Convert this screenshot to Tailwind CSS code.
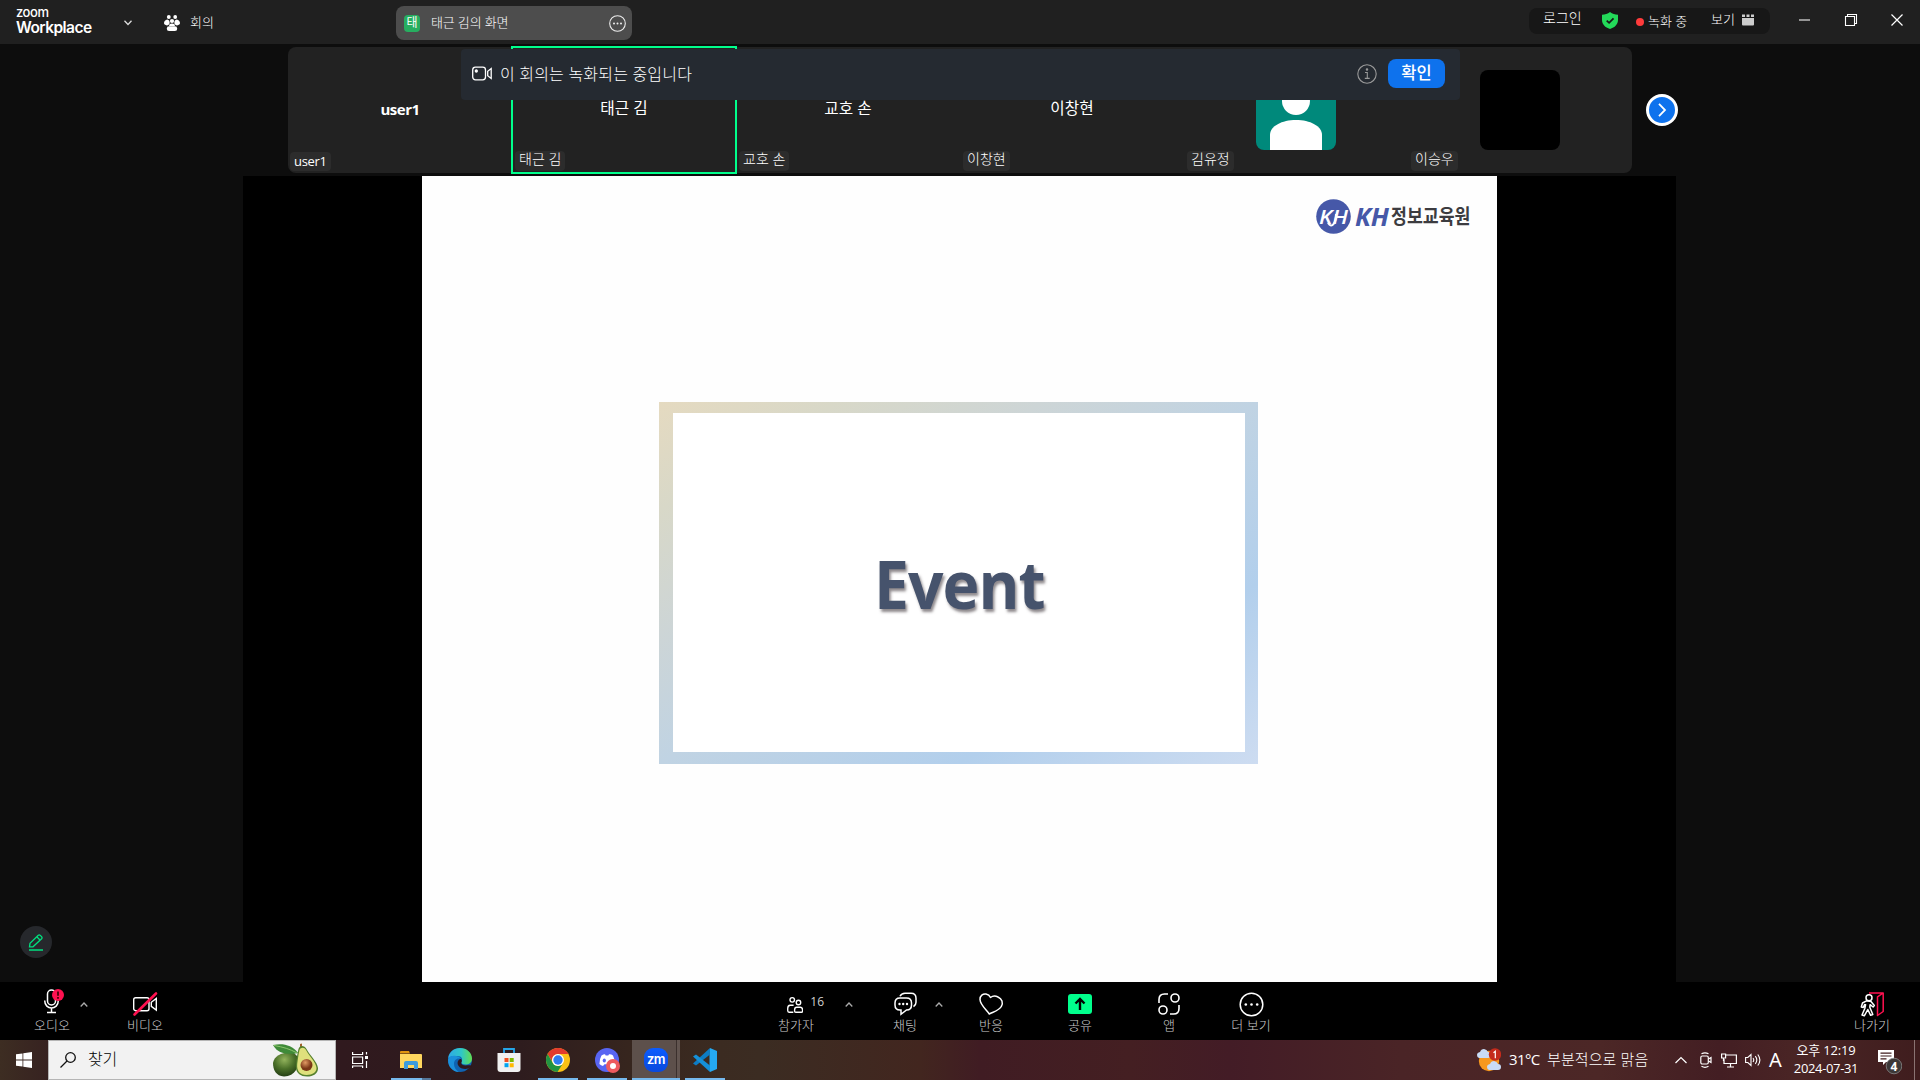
<!DOCTYPE html>
<html lang="ko">
<head>
<meta charset="utf-8">
<title>Zoom Workplace</title>
<script src="https://cdn.jsdelivr.net/npm/@tailwindcss/browser@4"></script>
</head>
<body class="w-[1920px] h-[1080px] overflow-hidden bg-[#0d0d0d] text-white flex flex-col font-['Open_Sans','Noto_Sans_CJK_KR',sans-serif]">

<!-- title bar -->
<header class="h-[44px] shrink-0 bg-[#202020] flex items-start">
  <div class="pl-[16px] w-[123px] pt-[6px] font-['Inter',sans-serif]">
    <div class="text-[13px] leading-[13px] font-medium tracking-[-0.45px]">zoom</div>
    <div class="text-[15.5px] leading-[17px] font-semibold tracking-[-0.55px]">Workplace</div>
  </div>
  <svg class="w-[10px] h-[6px] mt-[20px]" viewBox="0 0 10 6" fill="none" stroke="#ddd" stroke-width="1.3"><path d="M1.5 .8 5 4.5 8.500 .8"/></svg>
  <svg class="w-[16px] h-[17px] mt-[15px] ml-[31px]" viewBox="0 0 16 17" fill="#fff"><circle cx="4.800" cy="2" r="1.900"/><circle cx="11.200" cy="2" r="1.900"/><circle cx="8" cy="6" r="2.100"/><path d="M3.200 4.500C5 4.800 5.500 6 5.600 7.200 6 8.700 5 9.800 3 10.400 1 10.200 0 9.300 0 8c0-1.800 1.500-3.300 3.200-3.500zM12.800 4.500C11 4.800 10.500 6 10.400 7.200 10 8.700 11 9.800 13 10.400c2-.2 3-1.100 3-2.400 0-1.800-1.500-3.300-3.200-3.500z"/><path d="M5.500 9.200C7 8.400 9 8.400 10.500 9.200L11 11H5z"/><rect x="2.800" y="11.300" width="10.400" height="4.700" rx="2.300"/></svg>
  <span class="text-[13px] leading-[18px] mt-[13px] ml-[10px] w-[206px] font-light">회의</span>
  <div class="w-[236px] h-[34px] mt-[6px] rounded-lg bg-[#4d4d4d] flex items-center pl-2 pr-[6px]">
    <span class="w-4 h-[17px] rounded bg-[#27ae60] text-[12px] leading-[15px] text-center">태</span>
    <span class="text-[13px] leading-[18px] ml-[11px] flex-1 tracking-[-0.15px] -mt-[2px] font-light">태근 김의 화면</span>
    <svg class="w-[17px] h-[17px]" viewBox="0 0 17 17"><circle cx="8.500" cy="8.500" r="7.800" fill="none" stroke="#eee" stroke-width="1.100"/><g fill="#eee"><circle cx="5" cy="8.500" r="1"/><circle cx="8.500" cy="8.500" r="1"/><circle cx="12" cy="8.500" r="1"/></g></svg>
  </div>
  <div class="ml-[897px] mt-[8px] w-[241px] h-[26px] rounded-lg bg-[#171717] flex items-start text-[14px] leading-[18px] font-light">
    <span class="ml-[14px] mt-[1px] w-[59px]">로그인</span>
    <svg class="w-4 h-[17px] mt-1" viewBox="0 0 16 17"><path d="M8 0c2.300 1.900 5 2.600 8 2.700V8c0 4.300-3.200 7.500-8 9C3.200 15.500 0 12.300 0 8V2.700C3 2.600 5.700 1.900 8 0z" fill="#23d959"/><path d="m4.700 8.600 2.400 2.300 4.400-4.600" fill="none" stroke="#171717" stroke-width="1.700"/></svg>
    <span class="w-2 h-2 rounded-full bg-[#ff3b3b] ml-[18px] mt-[10px]"></span>
    <span class="text-[13px] mt-[4px] ml-[4px] w-[63px] whitespace-nowrap">녹화 중</span>
    <span class="text-[13px] mt-[2px] w-[31px]">보기</span>
    <svg class="w-3 h-3 mt-[6px]" viewBox="0 0 12 12" fill="#ccc"><path d="M0 4h12v6.500a1 1 0 0 1-1 1H1a1 1 0 0 1-1-1z"/><path d="M0 .5h3V3H0zM4.500 .5h3V3h-3zM9 .5h3V3H9z"/></svg>
  </div>
  <svg class="w-[105px] h-3 mt-[14px] ml-[29px]" viewBox="0 0 105 12" fill="none" stroke="#fff"><path d="M0 6h11" stroke="#bbb" stroke-width="1.500"/><path d="M46.500 2.500h9v9h-9zM48.500 2.500V.5h9v9h-2" stroke-width="1.100"/><path d="m92.500.5 11 11m0-11-11 11" stroke-width="1.200"/></svg>
</header>

<!-- meeting area -->
<main class="relative h-[938px] shrink-0 flex flex-col items-center">
  <section class="mt-[3px] ml-0 w-[1344px] h-[126px] shrink-0 rounded-lg bg-[#222] grid grid-cols-6 text-[15.7px]">
    <div class="relative flex items-center justify-center font-bold text-[15px] tracking-[-0.5px] pb-[2px]">user1
      <span class="absolute left-[2px] bottom-[2px] h-[19px] px-1 rounded bg-[#2c2c2c] font-normal text-[13px] leading-[18px] tracking-[-0.3px]">user1</span></div>
    <div class="relative flex items-center justify-center pb-[3px]">태근 김
      <span class="absolute -left-px -top-px w-[226px] h-[128px] border-2 border-[#00ff8c]"></span>
      <span class="absolute left-[3px] bottom-[2px] h-5 px-1 rounded bg-[#2c2c2c] font-light text-[14px] leading-[16px]">태근 김</span></div>
    <div class="relative flex items-center justify-center pb-[3px]">교호 손
      <span class="absolute left-[3px] bottom-[2px] h-5 px-1 rounded bg-[#2c2c2c] font-light text-[14px] leading-[16px]">교호 손</span></div>
    <div class="relative flex items-center justify-center pb-[3px]">이창현
      <span class="absolute left-[3px] bottom-[2px] h-5 px-1 rounded bg-[#2c2c2c] font-light text-[14px] leading-[16px]">이창현</span></div>
    <div class="relative flex items-center justify-center">
      <svg class="w-20 h-20 rounded-lg" viewBox="0 0 80 80"><path fill="#00897b" d="M0 0h80v80H0z"/><circle cx="40" cy="31" r="14" fill="#fff"/><path d="M14 80V65c0-9 12-15 26-15s26 6 26 15v15z" fill="#fff"/></svg>
      <span class="absolute left-[3px] bottom-[2px] h-5 px-1 rounded bg-[#2c2c2c] font-light text-[14px] leading-[16px]">김유정</span></div>
    <div class="relative flex items-center justify-center"><div class="w-20 h-20 rounded-lg bg-black"></div>
      <span class="absolute left-[3px] bottom-[2px] h-5 px-1 rounded bg-[#2c2c2c] font-light text-[14px] leading-[16px]">이승우</span></div>
  </section>
  <!-- next page of participants -->
  <button class="absolute left-[1646px] top-[50px] w-8 h-8 rounded-full border-[3px] border-white bg-[#0e72ed] flex items-center justify-center"><svg class="w-[10px] h-[14px]" viewBox="0 0 10 14" fill="none" stroke="#fff" stroke-width="1.800"><path d="m2 .8 6 6.200-6 6.200"/></svg></button>
  <!-- recording notice -->
  <div class="absolute left-[461px] top-[5px] w-[999px] h-[51px] rounded bg-[#252a31] flex items-center pl-[11px] pr-[15px]">
    <svg class="w-5 h-[15px] mt-[-3px]" viewBox="0 0 20 15" fill="none" stroke="#fff" stroke-width="1.300"><rect x=".7" y="1.200" width="12.800" height="12.600" rx="2.700"/><circle cx="4.300" cy="5" r="1" fill="#fff"/><path d="M19.200 2.500v10l-3.500-2.700V5.200z"/></svg>
    <span class="ml-[8px] text-[16px] leading-6 -mt-[2px] flex-1 tracking-[0.2px] font-light">이 회의는 녹화되는 중입니다</span>
    <svg class="w-5 h-5 mr-[11px] -mt-[2px]" viewBox="0 0 20 20" fill="none" stroke="#999" stroke-width="1.100"><circle cx="10" cy="10" r="9.200"/><path d="M8 8.500h2.300v5.700M7.800 14.400h4.900"/><circle cx="10" cy="5.500" r=".7" fill="#999"/></svg>
    <button class="w-[57px] h-[29px] -mt-[3px] rounded-lg bg-[#0e72ed] text-[16.500px] font-medium leading-[28px]">확인</button>
  </div>
  <!-- shared screen -->
  <section class="mt-[3px] -ml-px w-[1433px] h-[806px] bg-black flex justify-center">
    <div class="w-[1075px] h-full bg-[#fefefe] flex flex-col items-center">
      <svg class="self-end mr-[20px] mt-[22px] w-[162px] h-[38px] overflow-visible" viewBox="0 0 162 38">
        <circle cx="18.500" cy="18.500" r="17.300" fill="#4658a8"/>
        <text x="4" y="26" font-family="Open Sans" font-weight="600" font-style="italic" font-size="20" fill="#fff" textLength="29" lengthAdjust="spacingAndGlyphs">KH</text>
        <path d="M13 25c4 6 8 0 8-9" fill="none" stroke="#fff" stroke-width="2"/>
        <text x="40" y="27.500" font-family="Open Sans" font-weight="700" font-style="italic" font-size="25" fill="#4658a8" textLength="34" lengthAdjust="spacingAndGlyphs">KH</text>
        <text x="76" y="26" font-family="Noto Sans CJK KR" font-weight="700" font-size="20.500" fill="#3c3c40" textLength="79.500" lengthAdjust="spacingAndGlyphs">정보교육원</text>
      </svg>
      <div class="mt-[166px] w-[599px] h-[362px] pt-[11px] pb-3 pl-[14px] pr-[13px] bg-[linear-gradient(to_bottom_right,#e5dac0_0%,#d8d8c8_15%,#cdd5d6_32%,#c0d3e3_50%,#b2cfec_75%,#cddcf1_100%)] ml-[-3px]">
        <div class="w-full h-full bg-white flex items-center justify-center">
          <span class="font-['Open_Sans',sans-serif] font-bold text-[66px] leading-[80px] text-[#46536c] tracking-[-1px] scale-x-[.945] translate-x-px [text-shadow:2px_3px_3px_rgba(50,40,45,.55)]">Event</span>
        </div>
      </div>
    </div>
  </section>
  <!-- annotation button -->
  <button class="absolute left-5 top-[882px] w-8 h-8 rounded-full bg-[#26282c] flex items-center justify-center"><svg class="w-4 h-[17px]" viewBox="0 0 16 17" fill="none" stroke="#00e07f" stroke-width="1.300"><path d="M1.500 12.800 2 9.400 10.300 1.300q1-.8 2 .1l1.300 1.300q.9 1 0 2L5 12.800H1.500zM8.800 2.800l3.400 3.400M1 16h14"/></svg></button>
</main>

<!-- meeting controls -->
<nav class="relative h-[58px] shrink-0 bg-black text-[13px] leading-[16px] text-[#ccc] font-light flex">
  <div class="w-[36px] ml-[34px] flex flex-col items-center whitespace-nowrap">
    <svg class="w-[36px] h-[30px] mt-[5px]" viewBox="0 0 36 30" fill="none" stroke="#fff" stroke-width="1.500"><rect x="13.500" y="3" width="8" height="15" rx="4"/><path d="M10.700 13.500c0 10 13.600 10 13.600 0M17.500 21v4.500M13 25.500h9"/><circle cx="24" cy="8" r="6" fill="#ff1150" stroke="none"/><path d="M24 4.500v4.300M24 10v1.800" stroke="#300" stroke-width="1.600"/></svg>
    <span>오디오</span>
  </div>
  <svg class="w-2 h-[5px] mt-5 ml-[10px]" viewBox="0 0 8 5" fill="none" stroke="#aaa" stroke-width="1.300"><path d="M.7 4.500 4 1l3.300 3.500"/></svg>
  <div class="w-[36px] ml-[39px] flex flex-col items-center whitespace-nowrap">
    <svg class="w-[26px] h-[26px] mt-[9px]" viewBox="0 0 26 26" fill="none" stroke="#fff" stroke-width="1.400"><rect x="1.700" y="6.700" width="15.300" height="13" rx="2"/><path d="M24.300 7.500v11.500l-5-3.700v-4z"/><path d="M2.500 23.500 24 2.500" stroke="#ff1150" stroke-width="2.600" stroke-linecap="round"/></svg>
    <span>비디오</span>
  </div>
  <div class="w-[46px] ml-[615px] flex flex-col whitespace-nowrap">
    <div class="h-[35px] flex pl-[9px]">
      <svg class="w-[18px] h-[18px] mt-[14px]" viewBox="0 0 18 18" fill="none" stroke="#fff" stroke-width="1.500"><circle cx="5.800" cy="3.300" r="2.500"/><circle cx="12.700" cy="6.200" r="2.500"/><path d="M7 17H2.200Q.8 17 .8 15v-2c0-2.300 1-3.700 2.700-3.700h3.800M10.700 11.500h4q2.500 0 2.500 3v1.200q0 1.300-1.200 1.300H9.700q-1.300 0-1.300-1.300v-1.200q0-3 2.300-3z"/></svg>
      <span class="ml-[7px] mt-[12px] text-[12px] font-normal text-[#d0d0d0]">16</span>
    </div>
    <span>참가자</span>
  </div>
  <svg class="w-2 h-[5px] mt-5 ml-[21px]" viewBox="0 0 8 5" fill="none" stroke="#aaa" stroke-width="1.300"><path d="M.7 4.500 4 1l3.300 3.500"/></svg>
  <div class="w-[26px] ml-[39px] flex flex-col items-center whitespace-nowrap">
    <svg class="w-[23px] h-[24px] mt-[10px] mb-px" viewBox="0 0 23 24" fill="none" stroke="#fff" stroke-width="1.500"><path d="M6 4.300C7 2 9 1.200 11 1.200h6c3 0 5 2 5 5v4c0 2-1 3.500-2.500 4.500"/><path d="M6 6h6.500c3 0 5 2 5 5v2c0 3-2 5-5 5l-5.500 4.300V18H6c-3 0-5-2-5-5v-2c0-3 2-5 5-5z"/><g fill="#fff" stroke="none"><circle cx="5.500" cy="12" r="1.200"/><circle cx="9.200" cy="12" r="1.200"/><circle cx="13" cy="12" r="1.200"/></g></svg>
    <span>채팅</span>
  </div>
  <svg class="w-2 h-[5px] mt-5 ml-[17px]" viewBox="0 0 8 5" fill="none" stroke="#aaa" stroke-width="1.300"><path d="M.7 4.500 4 1l3.300 3.500"/></svg>
  <div class="w-[40px] ml-[28px] flex flex-col items-center whitespace-nowrap">
    <svg class="w-[25px] h-[24px] mt-[10px] mb-px" viewBox="0 0 25 24" fill="none" stroke="#fff" stroke-width="1.500" stroke-linejoin="round"><path d="M10.300 22C7.500 18 1.200 12.800 1 7.500.8 3.500 4 1.500 7 2c2.200.4 3.600 1.500 4.500 3.500C13.500 4 16.500 3.800 19 5c4 1.800 5.500 6 3.300 9.500C20.500 18 15.500 19.500 10.300 22z"/></svg>
    <span>반응</span>
  </div>
  <div class="w-[40px] ml-[49px] flex flex-col items-center whitespace-nowrap">
    <svg class="w-[24px] h-[20px] mt-[12px] mb-[3px]" viewBox="0 0 24 20"><rect width="24" height="20" rx="3" fill="#00ff8c"/><path d="M12 16V5M7.500 9.500 12 5l4.500 4.500" fill="none" stroke="#000" stroke-width="2.400"/></svg>
    <span>공유</span>
  </div>
  <div class="w-[40px] ml-[49px] flex flex-col items-center whitespace-nowrap">
    <svg class="w-[22px] h-[22px] mt-[11px] mb-[2px]" viewBox="0 0 22 22" fill="none" stroke="#fff" stroke-width="1.600"><circle cx="17" cy="5" r="4"/><circle cx="5" cy="17" r="4"/><path d="M1 10V6.500Q1 1 6.500 1H10M21 12v3.500Q21 21 15.500 21H12"/></svg>
    <span>앱</span>
  </div>
  <div class="w-[40px] ml-[42px] flex flex-col items-center whitespace-nowrap">
    <svg class="w-[25px] h-[25px] mt-[10px]" viewBox="0 0 25 25"><circle cx="12.500" cy="12.500" r="11.300" fill="none" stroke="#fff" stroke-width="1.500"/><g fill="#fff"><circle cx="6.800" cy="12.500" r="1.300"/><circle cx="12.500" cy="12.500" r="1.300"/><circle cx="18.200" cy="12.500" r="1.300"/></g></svg>
    <span>더 보기</span>
  </div>
  <div class="w-[40px] ml-auto mr-[28px] flex flex-col items-center whitespace-nowrap">
    <svg class="w-[24px] h-[25px] mt-[10px]" viewBox="0 0 24 25" fill="none" stroke-width="1.500" stroke-linejoin="round"><path d="M9 1h14.200v18.500l-5.700 4V4.800L23.200 1" stroke="#ff1150"/><circle cx="9" cy="5.800" r="3" stroke="#fff"/><path d="M6.500 8.800 2.500 11 1.300 15l2 .5 1.300-3 1 .2-.8 3.800L2 23l2.300.8 3.500-6.300 2.800 5.800 2.200-.8-3-7.300.3-2.500 3 2.300 1.200-1.500-3.300-4z" stroke="#fff"/></svg>
    <span>나가기</span>
  </div>
</nav>

<!-- Windows taskbar -->
<footer class="h-10 shrink-0 flex bg-[linear-gradient(90deg,#3d2d22_0px,#351f20_60px,#30191e_340px,#2e1c1e_520px,#37261e_640px,#3b2b21_720px,#3b2c22_760px,#42261f_920px,#401c23_980px,#441f22_1130px,#431c26_1230px,#4a2426_1400px,#4c2726_1600px,#431e23_1720px,#4a2525_1800px,#3f1d1e_1920px)]">
  <div class="w-12 flex items-center justify-center"><svg class="w-4 h-4" viewBox="0 0 16 16" fill="#fff"><path d="M0 2.300 6.500 1.400v6.200H0zM7.300 1.300 16 0v7.600H7.300zM0 8.400h6.500v6.200L0 13.700zM7.300 8.400H16V16l-8.700-1.300z"/></svg></div>
  <div class="w-[288px] h-10 bg-[#f2f2f2] border border-[#b5b5b5] flex items-center pl-[11px] pr-[17px] text-[#222]">
    <svg class="w-4 h-4" viewBox="0 0 16 16" fill="none" stroke="#111" stroke-width="1.300"><circle cx="10.500" cy="5.500" r="4.800"/><path d="M7 9 .5 15.500"/></svg>
    <span class="ml-[12px] text-[16px] leading-6 tracking-[-0.2px] -mt-[2px] flex-1 font-light text-black">찾기</span>
    <svg class="w-[45px] h-[34px]" viewBox="0 0 45 34">
      <defs><radialGradient id="av" cx=".45" cy=".3" r=".7"><stop offset="0" stop-color="#92b35c"/><stop offset=".55" stop-color="#4b7029"/><stop offset="1" stop-color="#243f14"/></radialGradient><radialGradient id="pit" cx=".4" cy=".3"><stop offset="0" stop-color="#e19a63"/><stop offset="1" stop-color="#7a3716"/></radialGradient></defs>
      <path d="M0 20C1 12 12 8 21 10l4 4c2 10-3 19-14 19.500C3 33 0 27 0 20z" fill="url(#av)"/>
      <path d="M0 2c10-2 19 0 25 8C15 12 5 11 0 2z" fill="#3f8a39"/><path d="M1 2.500C10 4 17 6 24 10" stroke="#8cc66c" fill="none"/>
      <path d="M27 1l2-.5L29 4h-2z" fill="#a0622e"/>
      <path d="M25.500 6c1-4 6-4 8 0 3 6 11 13 11.500 19 .3 5-4 8.500-11 8.500s-12-4-11-12c.7-5 1-10 2.500-15.500z" fill="#55802e"/>
      <path d="M26.500 7c1-3 5-3 6.500 0 3 6 10 12 10.500 18 0 4-3.500 7-10 7s-10-4-9.300-11c.6-4 1-9 2.300-14z" fill="#dfe07c"/>
      <circle cx="33.500" cy="22" r="6" fill="url(#pit)"/>
    </svg>
  </div>
  <div class="w-[48px] mr-[3px] flex items-center justify-center"><svg class="w-4 h-4" viewBox="0 0 16 16" fill="none" stroke="#fff" stroke-width="1.200"><path d="M.6 5h10v6.500H.6zM.6 0v2.500h10V0M.6 16v-2h10v2M14.500 0v2.500M14.500 9v7"/><path d="M13 4h3v3h-3z" fill="#fff" stroke="none"/></svg></div>
  <div class="flex gap-px">
    <div class="w-12 flex flex-col items-center"><div class="h-[38px] pt-[2px] flex items-center"><svg class="w-[22px] h-[19px]" viewBox="0 0 22 19"><path d="M0 1q0-1 1-1h8l1 2.500H0z" fill="#e0960f"/><path d="M0 3h21q1 0 1 1v13H0z" fill="#ffd75e"/><path d="M4 18v-6q0-2 2-2h10q2 0 2 2v6h-4v-4H8v4z" fill="#3c9bdc"/></svg></div><div class="w-10 h-[2px] bg-[linear-gradient(90deg,#76b9ed_78%,#54779a_78%)]"></div></div>
    <div class="w-12 flex items-center justify-center"><svg class="w-6 h-6" viewBox="0 0 24 24"><defs><linearGradient id="eg" x1="0" x2="1"><stop offset="0" stop-color="#2fa9e5"/><stop offset=".55" stop-color="#2fc7c8"/><stop offset="1" stop-color="#63de50"/></linearGradient></defs><circle cx="12" cy="12" r="12" fill="#0f62b0"/><path d="M.2 10C1 4 6 0 12 0c7 0 12 5 12 10.500 0 4-3 6-6.500 6-3 0-4.500-1.200-4-2.500 1.500-2.500.5-6-4-6C5 7.700 2 8.500.2 10z" fill="url(#eg)"/><path d="M.1 11C1 8.500 4 7.500 7 7.800c3 .2 5 1.700 6 3.200-4-1.500-7 1-7 5 0 3.500 2 6.500 5 8C4 23.500-.5 18 .1 11z" fill="#1b8fda"/><path d="M13 11c-4 0-5.500 7 1 9.500 4 1.200 7 0 8.500-1.500l.5.500c2-3-3-2-5.500-2-3.500 0-4.800-1.500-4-3.500q.8-1.300-.5-3z" fill="#30171d"/></svg></div>
    <div class="w-12 flex items-center justify-center"><svg class="w-6 h-6" viewBox="0 0 24 24"><path d="M7 5V1h10v4" fill="none" stroke="#25a5e8" stroke-width="1.800"/><path d="M.5 5h23v16q0 3-3 3h-17q-3 0-3-3z" fill="#f1f1f1"/><path d="M7.500 10h4v4h-4z" fill="#f25022"/><path d="M12.700 10h4v4h-4z" fill="#7fba00"/><path d="M7.500 15.200h4v4h-4z" fill="#00a4ef"/><path d="M12.700 15.200h4v4h-4z" fill="#ffb900"/></svg></div>
    <div class="w-12 flex flex-col items-center"><div class="h-[38px] pt-[2px] flex items-center"><svg class="w-6 h-6" viewBox="0 0 24 24"><circle cx="12" cy="12" r="12" fill="#fbc116"/><path d="M1.600 6A12 12 0 0 1 22.400 6H12a6 6 0 0 0-5.500 8z" fill="#e33b2e"/><path d="M1.600 6A12 12 0 0 0 11.500 24L17 15.300A6 6 0 0 1 6.800 15z" fill="#229342"/><circle cx="12" cy="12" r="6" fill="#fff"/><circle cx="12" cy="12" r="4.700" fill="#307cf0"/></svg></div><div class="w-10 h-[2px] bg-[#76b9ed]"></div></div>
    <div class="w-12 flex flex-col items-center"><div class="h-[38px] pt-[2px] flex items-center"><svg class="w-6 h-6 overflow-visible" viewBox="0 0 24 24"><circle cx="12" cy="12" r="12" fill="#5865f2"/><path d="M6.500 7.500Q9 6 10 6.300l.7 1.200h2.600L14 6.300Q16 6 18 7.500q2 4 1.800 8.500Q18 17.500 16 18l-1.200-1.700H9.500L8 18Q6 17.500 4.400 16q0-5 2.100-8.500z" fill="#fff"/><ellipse cx="9.300" cy="12.500" rx="1.600" ry="1.900" fill="#5865f2"/><circle cx="18" cy="18" r="7" fill="#ee5a5e"/><circle cx="18" cy="18" r="3" fill="#fff"/></svg></div><div class="w-10 h-[2px] bg-[#76b9ed]"></div></div>
    <div class="w-12 flex flex-col items-center bg-[linear-gradient(90deg,#5d504b_44px,#3b302d_44px,#3b302d_45px,#625550_45px)]"><div class="h-[38px] pt-[2px] flex items-center"><div class="w-6 h-6 rounded-[9px] bg-[linear-gradient(#0b5cff,#0a49dc)] font-['Inter'] font-semibold text-[13px] tracking-[-0.6px] leading-[22px] text-center">zm</div></div><div class="w-12 h-[2px] bg-[#76b9ed]"></div></div>
    <div class="w-12 flex flex-col items-center"><div class="h-[38px] pt-[2px] flex items-center"><svg class="w-6 h-6" viewBox="0 0 24 24"><path d="m17 0 7 3v18l-7 3-.5-6V6z" fill="#25a9f2"/><path d="M17 6.500 3 17.500l-3-2L17 0z" fill="#0d7cc4"/><path d="M17 17.500 3 6.500l-3 2L17 24z" fill="#1590d8"/></svg></div><div class="w-10 h-[2px] bg-[#76b9ed]"></div></div>
  </div>
  <!-- weather, tray and clock -->
  <div class="ml-auto flex items-center">
    <svg class="w-6 h-[24px]" viewBox="0 0 24 24"><circle cx="12" cy="13" r="10.200" fill="#f7981d"/><path d="M2 10q-2-.5-2-3t3-3Q4 1 7 1q3 .3 4 3 3 0 3 3t-3 3z" fill="#c9dcf5"/><path d="M12 22q-2-.5-2-3t3-3q1-3 4-3 3 .3 4 3 3 0 3 3t-3 3z" fill="#c9dcf5"/><circle cx="18" cy="6.500" r="6.200" fill="#c42b1c"/><path d="m16.500 4.700 1.800-1.400v7" stroke="#fff" stroke-width="1.200" fill="none"/></svg>
    <span class="ml-2 text-[15px] leading-6 -mt-[2px] w-[38px] tracking-[-0.6px]">31°C</span>
    <span class="text-[15px] leading-6 -mt-[2px] w-[128px] whitespace-nowrap font-light tracking-[0.1px]">부분적으로 맑음</span>
    <svg class="w-3 h-2" viewBox="0 0 12 8" fill="none" stroke="#fff" stroke-width="1.200"><path d="m.5 7 5.500-5.500L11.500 7"/></svg>
    <svg class="w-3 h-4 ml-[13px]" viewBox="0 0 12 16" fill="none" stroke="#fff" stroke-width="1.200"><rect x=".8" y="4" width="7.500" height="8" rx="1.500"/><path d="M8.500 7 11 5.500v5L8.500 9M1.500 1.800q3.500-2 7 0M1.500 14.300q3.500 2 7 0"/></svg>
    <svg class="w-4 h-4 ml-[9px]" viewBox="0 0 16 16" fill="none" stroke="#fff" stroke-width="1.200"><path d="M5 3h10.400v8.500H3V7M9.500 11.500V15M6 15h7M.6 2h4v4h-4zM2.500 6v3"/></svg>
    <svg class="w-4 h-4 ml-2" viewBox="0 0 16 16" fill="none" stroke="#fff" stroke-width="1.100"><path d="M.6 5.500h2.200L6 2.500v11l-3.200-3H.6zM8 6q1.500 2 0 4M10.300 4.200q3 3.800 0 7.600M12.800 2.500q4.200 5.500 0 11"/></svg>
    <span class="ml-[8px] w-[13px] text-[20px] leading-6 font-['Noto_Sans'] tracking-[-0.5px]">A</span>
    <div class="ml-[9px] w-[70px] text-center text-[13px] leading-[18px] -mt-[2px] whitespace-nowrap"><div class="tracking-[-0.2px]">오후 12:19</div><div class="tracking-[-0.35px]">2024-07-31</div></div>
    <svg class="w-6 h-[26px] ml-[17px] mt-[4px]" viewBox="0 0 24 26"><path d="M0 1h16v12H8l-3 3v-3H0z" fill="#fff"/><path d="M2.500 4.200h11M2.500 7h11M2.500 9.800h6" stroke="#3f1d1e" stroke-width="1.200"/><circle cx="16" cy="17" r="7.800" fill="#3c3838" stroke="#888" stroke-width=".8"/><text x="16" y="21.500" text-anchor="middle" font-family="Open Sans" font-weight="700" font-size="12" fill="#fff">4</text></svg>
    <span class="w-px h-10 bg-[#8a7372] ml-[12px] mr-[5px]"></span>
  </div>
</footer>
</body>
</html>
